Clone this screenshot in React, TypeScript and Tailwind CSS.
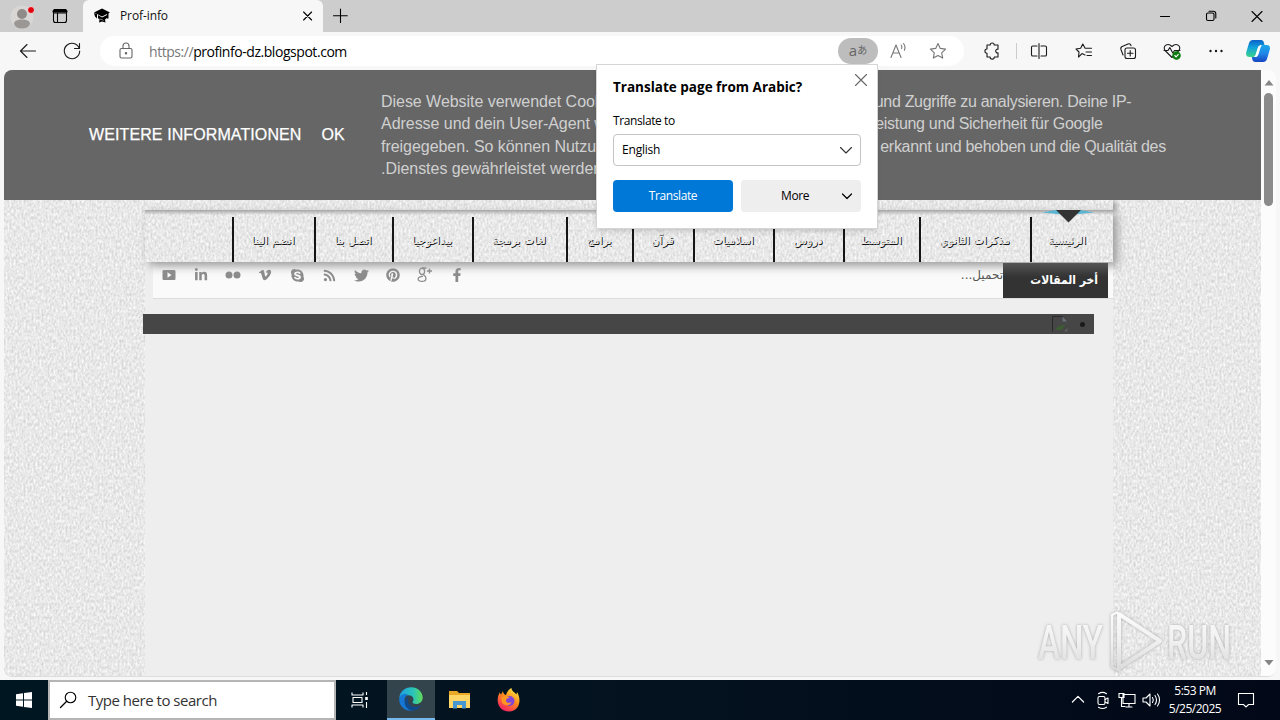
import type { ReactNode } from 'react';
import { FaFacebookF, FaLinkedinIn, FaPinterest, FaRss, FaSkype, FaTwitter, FaVimeoV } from 'react-icons/fa';

const NAV = [
  { label: 'انضم الينا', width: 'w-[82px]', text: 'w-[46px]' },
  { label: 'اتصل بنا', width: 'w-[78px]', text: 'w-[42px]' },
  { label: 'بيداغوجيا', width: 'w-[80px]', text: 'w-[44px]' },
  { label: 'لغات برمجة', width: 'w-[94px]', text: 'w-[58px]' },
  { label: 'برامج', width: 'w-[66px]', text: 'w-[30px]' },
  { label: 'قرآن', width: 'w-[61px]', text: 'w-[25px]' },
  { label: 'اسلاميات', width: 'w-[80px]', text: 'w-[44px]' },
  { label: 'دروس', width: 'w-[70px]', text: 'w-[34px]' },
  { label: 'المتوسط', width: 'w-[76px]', text: 'w-[40px]' },
  { label: 'مذكرات الثانوي', width: 'w-[111px]', text: 'w-[75px]' },
  { label: 'الرئيسية', width: 'w-[83px]', text: 'w-[38px]' },
];

const COOKIE_LINES = [
  ['Diese Website verwendet Cook', 'ies von Google, um Dienste anzubieten und Zugriffe zu analysieren. Deine IP-'],
  ['Adresse und dein User-Agent we', 'rden zusammen mit Messwerten zur Leistung und Sicherheit für Google'],
  ['freigegeben. So können Nutzung', 'sstatistiken generiert, Missbrauchsfälle erkannt und behoben und die Qualität des'],
  ['.Dienstes gewährleistet werden', ''],
];

type IconProps = { children: ReactNode; className?: string };

/** 20x20 line icon */
function Icon({ children, className = 'size-5' }: IconProps) {
  return (
    <svg
      viewBox="0 0 20 20"
      fill="none"
      stroke="currentColor"
      strokeWidth="1.1"
      strokeLinecap="round"
      strokeLinejoin="round"
      className={`shrink-0 ${className}`}
    >
      {children}
    </svg>
  );
}

function TabStrip() {
  return (
    <div className="flex h-8 shrink-0 bg-[#cdcdcd]">
      <div className="flex w-[83px] items-center rounded-br-md">
        <svg viewBox="0 0 24 24" className="ml-2.5 mt-1 size-6">
          <circle cx="12" cy="11" r="11.5" fill="#d9d7d5" />
          <circle cx="12" cy="8" r="5" fill="#8f8b88" />
          <path d="M4 18c0-3 3-4.500 8-4.500s8 1.500 8 4.500c-1 3-4 4.500-8 4.500s-7-1.500-8-4.500z" fill="#9b9794" />
          <circle cx="21" cy="4" r="3.500" fill="#e3000b" stroke="#e7e0df" />
        </svg>
        <Icon className="ml-4 size-5">
          <rect x="3.500" y="3.500" width="13" height="13" rx="2" />
          <path d="M3.500 5.500c0-1 .7-2 2-2h9c1.300 0 2 1 2 2v1.500h-13zM7.500 7v9.500" />
          <path d="M4 5.200h12" strokeWidth="2.800" />
        </Icon>
      </div>
      <div className="flex w-60 items-center rounded-t-md bg-[#f7f7f7]">
        <svg viewBox="0 0 18 18" className="ml-2.5 size-[18px]">
          <path d="M9 1.500 17 5.500 9 9.500 1 5.500z" />
          <path d="M5 8l4 2.600L14 8v3l-2 1.500.5 3-3.500-1-3 1 .5-2.500L5 11zM14 6h1.500v5.500H14zM1 6l3 1v4.500l-2-2z" />
          <path d="M5.500 12.500c1.500-.6 3-.3 5 1" stroke="#fff" fill="none" strokeWidth=".5" />
        </svg>
        <span className="ml-[9px] text-xs tracking-[-0.1px] text-[#111]">Prof-info</span>
        <Icon className="ml-auto mr-[7px] size-4">
          <path d="M4.500 5l10 10M14.500 5l-10 10" strokeWidth="1.400" />
        </Icon>
      </div>
      <Icon className="ml-[7px] mt-1.5 size-5">
        <path d="M10.500 3v13.500M3.500 9.700h13.800" />
      </Icon>
      <div className="ml-auto flex items-center">
        <Icon className="mr-[26px] size-5"><path d="M5.500 10.500h9" /></Icon>
        <Icon className="mr-[26px] size-5">
          <rect x="5.500" y="7" width="7.500" height="7.500" rx="1.500" />
          <path d="M8 5.200h4.200c1.700 0 2.600.8 2.600 2.600V12" />
        </Icon>
        <Icon className="mr-[13px] size-5"><path d="M5 5.500l10 10M15 5.500l-10 10" /></Icon>
      </div>
    </div>
  );
}

function CopilotLogo() {
  return (
    <svg viewBox="0 0 24 24" className="size-6">
      <defs>
        <linearGradient id="cpA" x1="0" y1="0" x2="0" y2="1">
          <stop offset="0" stopColor="#0b62c9" />
          <stop offset=".45" stopColor="#12a3dc" />
          <stop offset="1" stopColor="#3bd58a" />
        </linearGradient>
        <linearGradient id="cpB" x1="0" y1="0" x2="0" y2="1">
          <stop offset="0" stopColor="#1ba7e8" />
          <stop offset=".5" stopColor="#2187e8" />
          <stop offset="1" stopColor="#1745c0" />
        </linearGradient>
      </defs>
      <path d="M7 1h8c2 0 2.600 1.400 3 3l.5 2h-3c-2 0-3 1-3.600 3l-2 6.500c-.5 1.700-1.500 2.500-3 2.500H3.500C1 18-.3 16.500.2 13.500L3 4c.7-2 2-3 4-3z" fill="url(#cpA)" />
      <path d="M17 23H9.500c-2 0-2.800-1-3.300-3l-.4-2h2.400c2 0 3-1 3.600-3l2-6.500c.5-1.700 1.500-2.500 3.200-2.500h3.800c2.500 0 3.600 1.800 3 4.500L21 20c-.7 2-2 3-4 3z" fill="url(#cpB)" />
      <path d="M14.800 6.500c-1.600.2-2.600 1-3.100 2.700L9.500 16c-.2.900-.7 1.600-1.500 2h2c1.300-.2 2-1.200 2.500-2.700l2-6.500c.3-1 .7-1.700 1.300-2.300z" fill="#fff" />
    </svg>
  );
}

function Toolbar() {
  return (
    <div className="flex h-[38px] shrink-0 items-center bg-[#f7f7f7] text-[#1b1b1b]">
      <Icon className="ml-[18px] size-5"><path d="M17.500 10h-15M9 3.500 2.500 10 9 16.500" /></Icon>
      <Icon className="ml-6 size-5"><path d="M17.300 7.500A7.700 7.700 0 1 0 17.700 10M17.500 2.500v5h-5" /></Icon>
      <div className="ml-[18px] flex h-[30px] w-[864px] items-center rounded-full bg-white">
        <Icon className="ml-4 size-5 text-[#666]">
          <rect x="4" y="7.500" width="12" height="9.500" rx="1.500" />
          <path d="M7 7.500V5a3 3 0 0 1 6 0v2.500" />
          <circle cx="10" cy="12.300" r=".7" fill="currentColor" />
        </Icon>
        <span className="ml-[13px] pt-px text-sm tracking-[-0.45px] text-black">
          <span className="text-[#777]">https://</span>profinfo-dz.blogspot.com
        </span>
        <div className="ml-auto flex h-[26px] w-10 items-center justify-center rounded-full bg-[#bdbdbd] pb-0.5 text-[#666]">
          <span className="text-[15px] leading-none">a</span>
          <span className="font-['Noto_Sans_CJK_JP',sans-serif] text-[10px] leading-none">あ</span>
        </div>
        <Icon className="ml-2.5 size-5 text-[#777]">
          <path d="M3 16.500 8 4l5 12.500M4.800 12h6.400M13.200 4c.8 1 .9 2.300.4 3.600M15.500 2.500c1.600 1.900 1.900 4.300.9 6.800" strokeWidth="1.100" />
        </Icon>
        <Icon className="ml-5 mr-4 size-5 text-[#777]">
          <path d="M10 2.500l2.300 4.900 5.300.7-3.900 3.700 1 5.300-4.700-2.600-4.700 2.600 1-5.300L2.400 8.100l5.300-.7z" />
        </Icon>
      </div>
      <Icon className="ml-[18px] size-5">
        <path d="M5 4h3.200a2 2 0 1 1 4 0H16v4.200a1.900 1.900 0 1 0 0 3.700V16h-3.700a2.100 2.100 0 1 1-4.200 0H5v-3.800a2.100 2.100 0 1 1 0-4.200z" />
      </Icon>
      <div className="ml-3.5 h-4 w-px bg-[#ccc]" />
      <Icon className="ml-3 size-5">
        <path d="M10 2.500v15M8 5H3.800C3 5 2.500 5.500 2.500 6.300v7.400c0 .8.500 1.300 1.300 1.300H8M12 5h4.200c.8 0 1.300.5 1.300 1.300v7.400c0 .8-.5 1.300-1.300 1.300H12" />
      </Icon>
      <Icon className="ml-[25px] size-5">
        <path d="M11 14 8 12.600 4.500 16l.5-5L2 8l4.600-.7L8.800 3l2.300 4.300h6.400M12 11h5.500M13 14.500h4.500" />
      </Icon>
      <Icon className="ml-6 size-5">
        <rect x="7" y="7" width="10.500" height="10.500" rx="2" />
        <path d="M12.200 9.500v5.500M9.500 12.200H15M5 14 3 8.500C2.500 7 2.700 6 4.200 5.400L10 3c1.500-.6 2.500 0 3 1.700" />
      </Icon>
      <Icon className="ml-6 size-5">
        <path d="M10 16.500 3.500 10c-4-4.500 2-9 6.500-4.500 4.500-4.500 10.500 0 6.500 4.500zM2 9.500h4l1.800-3 3 5.500 1.700-2.500H18" />
        <circle cx="14.500" cy="14.500" r="3.700" fill="#107c10" stroke="#107c10" />
        <path d="m12.800 14.500 1.300 1.300 2.200-2.500" stroke="#fff" />
      </Icon>
      <Icon className="ml-6 size-5">
        <g fill="currentColor" stroke="none">
          <circle cx="4.500" cy="10" r="1.200" />
          <circle cx="10" cy="10" r="1.200" />
          <circle cx="15.500" cy="10" r="1.200" />
        </g>
      </Icon>
      <div className="ml-5"><CopilotLogo /></div>
    </div>
  );
}

/** Grainy paper texture behind the blog */
function Paper({ id }: { id: string }) {
  return (
    <svg className="absolute inset-0 size-full">
      <filter id={id} x="0" y="0" width="100%" height="100%" colorInterpolationFilters="sRGB">
        <feTurbulence type="fractalNoise" baseFrequency="0.5 0.3" numOctaves="3" seed="4" />
        <feColorMatrix values="0.24 0 0 0 0.79  0.24 0 0 0 0.79  0.24 0 0 0 0.79  0 0 0 0 1" />
      </filter>
      <rect width="100%" height="100%" filter={`url(#${id})`} />
    </svg>
  );
}

function CookieBar() {
  return (
    <div className="relative flex h-[130px] shrink-0 bg-[#666] font-['Liberation_Sans',Arial,sans-serif] text-base">
      <div className="flex w-[377px] items-center pl-[85px] tracking-[0.1px] text-white [-webkit-text-stroke:0.25px_#fff]">
        <span className="whitespace-nowrap">WEITERE INFORMATIONEN</span>
        <span className="ml-5">OK</span>
      </div>
      <div className="pt-[21px] leading-[22.300px] text-[#d0d0d0]">
        {COOKIE_LINES.map(([start, rest]) => (
          <p key={start} className="whitespace-nowrap tracking-[-0.04px]">
            {start}
            <span className="tracking-[-0.31px]">{rest}</span>
          </p>
        ))}
      </div>
    </div>
  );
}

function Socials() {
  return (
    <div className="flex w-80 pt-[3px] text-[#8c8c8c] [&>*]:flex [&>*]:h-4 [&>*]:w-8 [&>*]:items-center [&>*]:justify-center">
      <span>
        <svg viewBox="0 0 14 12" className="h-3 w-3.5" fill="currentColor">
          <path fillRule="evenodd" d="M2 1h10c1 0 1.500.6 1.500 1.500v7c0 1-.5 1.500-1.500 1.500H2c-1 0-1.500-.5-1.500-1.500v-7C.5 1.600 1 1 2 1zm3.500 2.300v5.400l4-2.700z" />
        </svg>
      </span>
      <span><FaLinkedinIn size={14} /></span>
      <span>
        <svg viewBox="0 0 16 8" className="h-2 w-4" fill="currentColor">
          <circle cx="4" cy="4" r="3.500" />
          <circle cx="12" cy="4" r="3.500" />
        </svg>
      </span>
      <span><FaVimeoV size={14} /></span>
      <span><FaSkype size={15} /></span>
      <span><FaRss size={13} /></span>
      <span><FaTwitter size={15} /></span>
      <span><FaPinterest size={14} /></span>
      <span>
        <svg viewBox="0 0 16 16" className="size-4" fill="none" stroke="currentColor" strokeWidth="1.300">
          <ellipse cx="5" cy="4.300" rx="2.600" ry="3.200" />
          <path d="M5 1h4.500M6 7.300c.5 1 3 1.700 3 3.900 0 2-2 3.200-4.200 3.200-2 0-3.700-.9-3.700-2.500C1.100 10 3.500 9.500 6 9.300M12.500 1.500v5M10 4h5" />
        </svg>
      </span>
      <span><FaFacebookF size={14} /></span>
    </div>
  );
}

function Blog() {
  return (
    <div className="relative flex flex-1 flex-col overflow-hidden">
      <Paper id="paper" />
      <div className="relative ml-[141px] flex w-[968px] flex-1 flex-col">
        <div className="h-2.5 shadow-[3px_2px_5px_#999]" />
        {/* main menu */}
        <nav className="relative z-10 h-[52px] shadow-[4px_4px_9px_#999]">
          <div className="absolute inset-0 overflow-hidden">
            <Paper id="paperNav" />
          </div>
          <div className="absolute inset-x-0 top-0 h-[5px] bg-linear-to-b from-[#a5a5a5] to-transparent" />
          <div className="relative flex h-full pl-[87px] pt-[7px]">
            {NAV.map((n) => (
              <a
                key={n.label}
                className={`${n.width} flex shrink-0 items-center border-l-2 border-[#151515] pl-4 pt-[3px]`}
              >
                <span
                  dir="rtl"
                  className={`${n.text} flex justify-center whitespace-nowrap font-['DejaVu_Sans',sans-serif] text-[11px] text-[#e8e8e8] [text-shadow:1px_1px_0_#111]`}
                >
                  {n.label}
                </span>
              </a>
            ))}
          </div>
          <svg viewBox="0 0 60 14" className="absolute right-[15px] top-0 h-3.5 w-[60px]">
            <path d="M4 2.500 18 0h24l14 2.500L30 5z" fill="#58b6d3" />
            <path d="M18 0h25L30.500 12.500z" fill="#333" />
          </svg>
        </nav>
        <div className="flex flex-1 flex-col bg-[#eee]">
          {/* latest posts ticker */}
          <div className="ml-2 flex h-[37px] justify-between border-b border-[#ddd] bg-[#fafafa]">
            <div className="pt-0.5"><Socials /></div>
            <div className="relative z-20 flex pr-[5px] pt-px">
              <span dir="rtl" className="pt-[3px] font-['DejaVu_Sans',sans-serif] text-[12px] text-[#555]">تحميل...</span>
              <div
                dir="rtl"
                className="h-[35px] w-[105px] bg-linear-to-b from-[#555] to-[#333] to-40% pr-2.5 pt-2 font-['DejaVu_Sans_Condensed','DejaVu_Sans',sans-serif] text-[12px] font-bold [font-stretch:condensed] text-white"
              >
                أخر المقالات
              </div>
            </div>
          </div>
          {/* slider that has not loaded its picture */}
          <div className="-ml-0.5 mt-[15px] flex h-5 w-[951px] items-center justify-end bg-[#464646] pr-[9px]">
            <svg viewBox="0 0 16 16" className="size-4">
              <path d="M.5 15.500V.5h10l5 5" fill="none" stroke="#292929" />
              <path d="M10.500.5v5h5z" fill="#68717a" />
              <path d="M3 14c2-4 6-5 10-5l-3 5z" fill="#3d5b35" />
              <path d="M2 15.500h10l3.500-3.500v3.500z" fill="#606060" />
            </svg>
            <div className="ml-3 size-[5px] rounded-full bg-[#1a1a1a]" />
          </div>
        </div>
      </div>
    </div>
  );
}

function Scrollbar() {
  return (
    <div className="flex w-[15px] shrink-0 flex-col items-center bg-[#fcfcfc]">
      <svg viewBox="0 0 10 6" className="mt-2.5 h-1.5 w-2.5"><path d="M5 0l4.500 5.500h-9z" fill="#858585" /></svg>
      <div className="mt-[7px] h-[113px] w-[9px] rounded-full bg-[#8b8b8b]" />
      <svg viewBox="0 0 10 6" className="mb-2.5 mt-auto h-1.5 w-2.5"><path d="M5 5.500.5 0h9z" fill="#858585" /></svg>
    </div>
  );
}

function TranslatePopup() {
  return (
    <div className="absolute left-[596px] top-16 z-30 h-[165px] w-[282px] border border-[#d5d5d5] bg-white px-4 text-xs text-black shadow-md">
      <div className="flex h-[45px] items-center">
        <h2 className="whitespace-nowrap pb-px text-[13.500px] font-bold">Translate page from Arabic?</h2>
        <Icon className="-mr-2.5 mb-[15px] ml-auto size-5 text-[#666]"><path d="M4.500 4.500l11 11M15.500 4.500l-11 11" /></Icon>
      </div>
      <p className="h-6 pt-px leading-5 tracking-[-0.4px]">Translate to</p>
      <div className="flex h-8 items-center rounded-sm border border-[#c4c4c4] pl-2 pr-1 tracking-[-0.2px]">
        English
        <Icon className="ml-auto size-5 text-[#333]"><path d="M4.500 7.500 10 13l5.500-5.500" /></Icon>
      </div>
      <div className="mt-3.5 flex gap-2 tracking-[-0.4px]">
        <button className="h-8 w-[120px] rounded-sm bg-[#0078d7] text-white">Translate</button>
        <button className="flex h-8 w-[120px] items-center rounded-sm bg-[#eee] pl-10 pr-1">
          More
          <Icon className="ml-auto size-5"><path d="M5.500 8 10 12.500 14.500 8" strokeWidth="1.200" /></Icon>
        </button>
      </div>
    </div>
  );
}

function Watermark() {
  return (
    <svg viewBox="0 0 204 70" className="absolute left-[1034px] top-[606px] z-20 h-[70px] w-[204px] overflow-visible drop-shadow-[0_0_1.5px_#aaa]">
      <defs>
        <linearGradient id="wm" gradientUnits="userSpaceOnUse" x1="0" y1="10" x2="0" y2="62">
          <stop offset="0" stopColor="#fafafa" />
          <stop offset=".5" stopColor="#f0f0f0" />
          <stop offset="1" stopColor="#dcdcdc" />
        </linearGradient>
      </defs>
      <g fill="url(#wm)" fontFamily="Roboto, sans-serif" fontSize="49" fontWeight="500">
        <text x="4" y="53" textLength="65" lengthAdjust="spacingAndGlyphs">ANY</text>
        <text x="133" y="53" textLength="64" lengthAdjust="spacingAndGlyphs">RUN</text>
      </g>
      <g fill="none" stroke="url(#wm)" strokeWidth="4" strokeLinejoin="round">
        <path d="M85 8v54l41-27z" />
        <path d="M84 6l-6 3v52l8 4" strokeWidth="2.500" />
      </g>
    </svg>
  );
}

function EdgeLogo() {
  return (
    <svg viewBox="0 0 24 24" className="size-6">
      <defs>
        <linearGradient id="edA" x1="0" y1="0" x2="1" y2="0">
          <stop offset="0" stopColor="#1b9de2" />
          <stop offset=".6" stopColor="#2ac5b8" />
          <stop offset="1" stopColor="#62db57" />
        </linearGradient>
      </defs>
      <path d="M.2 11C1 4.500 6 .3 12 .3c7 0 11.700 5 11.700 10.200 0 4-3 6.500-6.500 6.500-3 0-4.200-1.200-3.500-2.200 2.300-3-.2-6.500-4.200-6.500-4 0-7.500 1-9.300 2.700z" fill="url(#edA)" />
      <path d="M.2 11.500C1 8 5 6.300 9 7.500c-3 1.500-4.300 5-3 9 1 3.500 4.500 6.500 8.500 7C7 25-.5 19.500.2 11.500z" fill="#1478d4" />
      <path d="M9.500 10c-2.500 5 1 10 6.500 10 2.300 0 4.300-.7 6-1.800-2 4-6.500 6-10.500 5.200C5 21 3.500 12.500 9.500 10z" fill="#114a8b" />
    </svg>
  );
}

function Taskbar() {
  return (
    <div className="flex h-10 shrink-0 items-center bg-linear-to-r from-[#001721] via-[#04121f] to-[#020817] text-white">
      <div className="flex w-12 justify-center">
        <svg viewBox="0 0 16 16" className="size-4" fill="#fff">
          <path d="M0 2.200 7 1.200v6.300H0zM8 1l8-1v7.500H8zM0 8.500h7v6.300l-7-1zM8 8.500h8V16l-8-1z" />
        </svg>
      </div>
      <div className="flex h-10 w-72 items-center border-2 border-[#b5b5b5] bg-white text-[#333]">
        <Icon className="ml-2 size-5 text-black">
          <circle cx="12.500" cy="7.500" r="5.300" />
          <path d="M8.700 11.300 2.500 17.500" strokeWidth="1.300" />
        </Icon>
        <span className="ml-2.5 text-[15px] tracking-[-0.48px]">Type here to search</span>
      </div>
      <div className="flex w-[51px] justify-center pr-1">
        <Icon className="size-5">
          <g strokeLinecap="butt">
            <path d="M2 2.500v2.500h11V2.500M2 17.500V15h11v2.500M3 7.500h9v5H3zM16.500 2v3M16.500 12v6" />
            <path d="M15.200 7h2.600v3h-2.600z" fill="#fff" stroke="none" />
          </g>
        </Icon>
      </div>
      <div className="flex h-10 w-12 items-center justify-center border-b-2 border-[#76b9ed] bg-[#33444d]">
        <EdgeLogo />
      </div>
      <svg viewBox="0 0 22 20" className="ml-3.5 h-5 w-[22px]">
        <path d="M0 1h8l2 2h11v15H0z" fill="#e9a825" />
        <path d="M0 5h21v13H0z" fill="#ffd566" />
        <path d="M4 18.500V11h13v7.500h-4V15H8v3.500z" fill="#4596d1" />
      </svg>
      <svg viewBox="0 0 24 24" className="ml-[26px] size-6">
        <defs>
          <linearGradient id="ffx" x1=".8" y1="0" x2=".2" y2="1">
            <stop offset="0" stopColor="#fff044" />
            <stop offset=".45" stopColor="#ff8a1d" />
            <stop offset="1" stopColor="#f5156c" />
          </linearGradient>
        </defs>
        <path d="M3 4c0 1 .2 2 1 2.500L6 3c0 2 1 3.500 3 4 1-3 3-6 5.500-7 0 3 3 4 5 6.500L20 4c5 8 2.500 19-8 19.500C1 23.500-2 12 3 4z" fill="url(#ffx)" />
        <circle cx="12.500" cy="13" r="5" fill="#8245d9" />
        <path d="M4 10c3-3 6-2.500 9-.5-2 .5-4 1-4 3 0 2.500 3 3 5.500 1.500-1 4-7 4.500-9.500.5z" fill="#ff9722" />
      </svg>
      <div className="ml-auto flex items-center">
        <Icon className="size-4"><path d="M3 12.500l7-7 7 7" strokeWidth="1.500" /></Icon>
        <Icon className="ml-[7px] size-5">
          <rect x="5" y="6.500" width="7" height="8" rx="1.500" />
          <path d="M12 9.500 15 8v5.500l-3-1.500M5.500 3.700c2.500-1.700 5.500-1.700 8 0M5.500 17.200c2.500 1.600 5.500 1.600 8 0" />
        </Icon>
        <Icon className="ml-1 size-5">
          <path d="M6 4.500h12v9H6zM9 17h6M12 13.500V17M2 3.500h5v4H2zM4.500 7.500V16.500H8" strokeLinejoin="miter" />
        </Icon>
        <Icon className="ml-1 size-5">
          <path d="M2 8h3l4-4v12l-4-4H2zM11.500 7.500c1 1.500 1 3.500 0 5M14 5.500c2 2.500 2 6.500 0 9M16.500 4c2.700 3.500 2.700 8.500 0 12" />
        </Icon>
        <div className="ml-[7px] w-[54px] whitespace-nowrap text-center text-xs leading-[18px] tracking-[-0.5px]">
          <p>5:53 PM</p>
          <p>5/25/2025</p>
        </div>
        <Icon className="ml-3.5 mr-6 size-5">
          <path d="M2.500 3.500h15v11h-5L10 17l-2.500-2.500h-5z" strokeLinejoin="miter" />
        </Icon>
      </div>
    </div>
  );
}

export default function App() {
  return (
    <div className="relative flex h-[720px] w-[1280px] flex-col overflow-hidden bg-[#f7f7f7] font-['Open_Sans','Noto_Sans',sans-serif]">
      <TabStrip />
      <Toolbar />
      <main className="mx-1 mb-[3px] flex min-h-0 flex-1 overflow-hidden rounded-lg border-b border-[#ddd]">
        <div className="flex min-w-0 flex-1 flex-col">
          <CookieBar />
          <Blog />
        </div>
        <Scrollbar />
      </main>
      <Taskbar />
      <TranslatePopup />
      <Watermark />
    </div>
  );
}
